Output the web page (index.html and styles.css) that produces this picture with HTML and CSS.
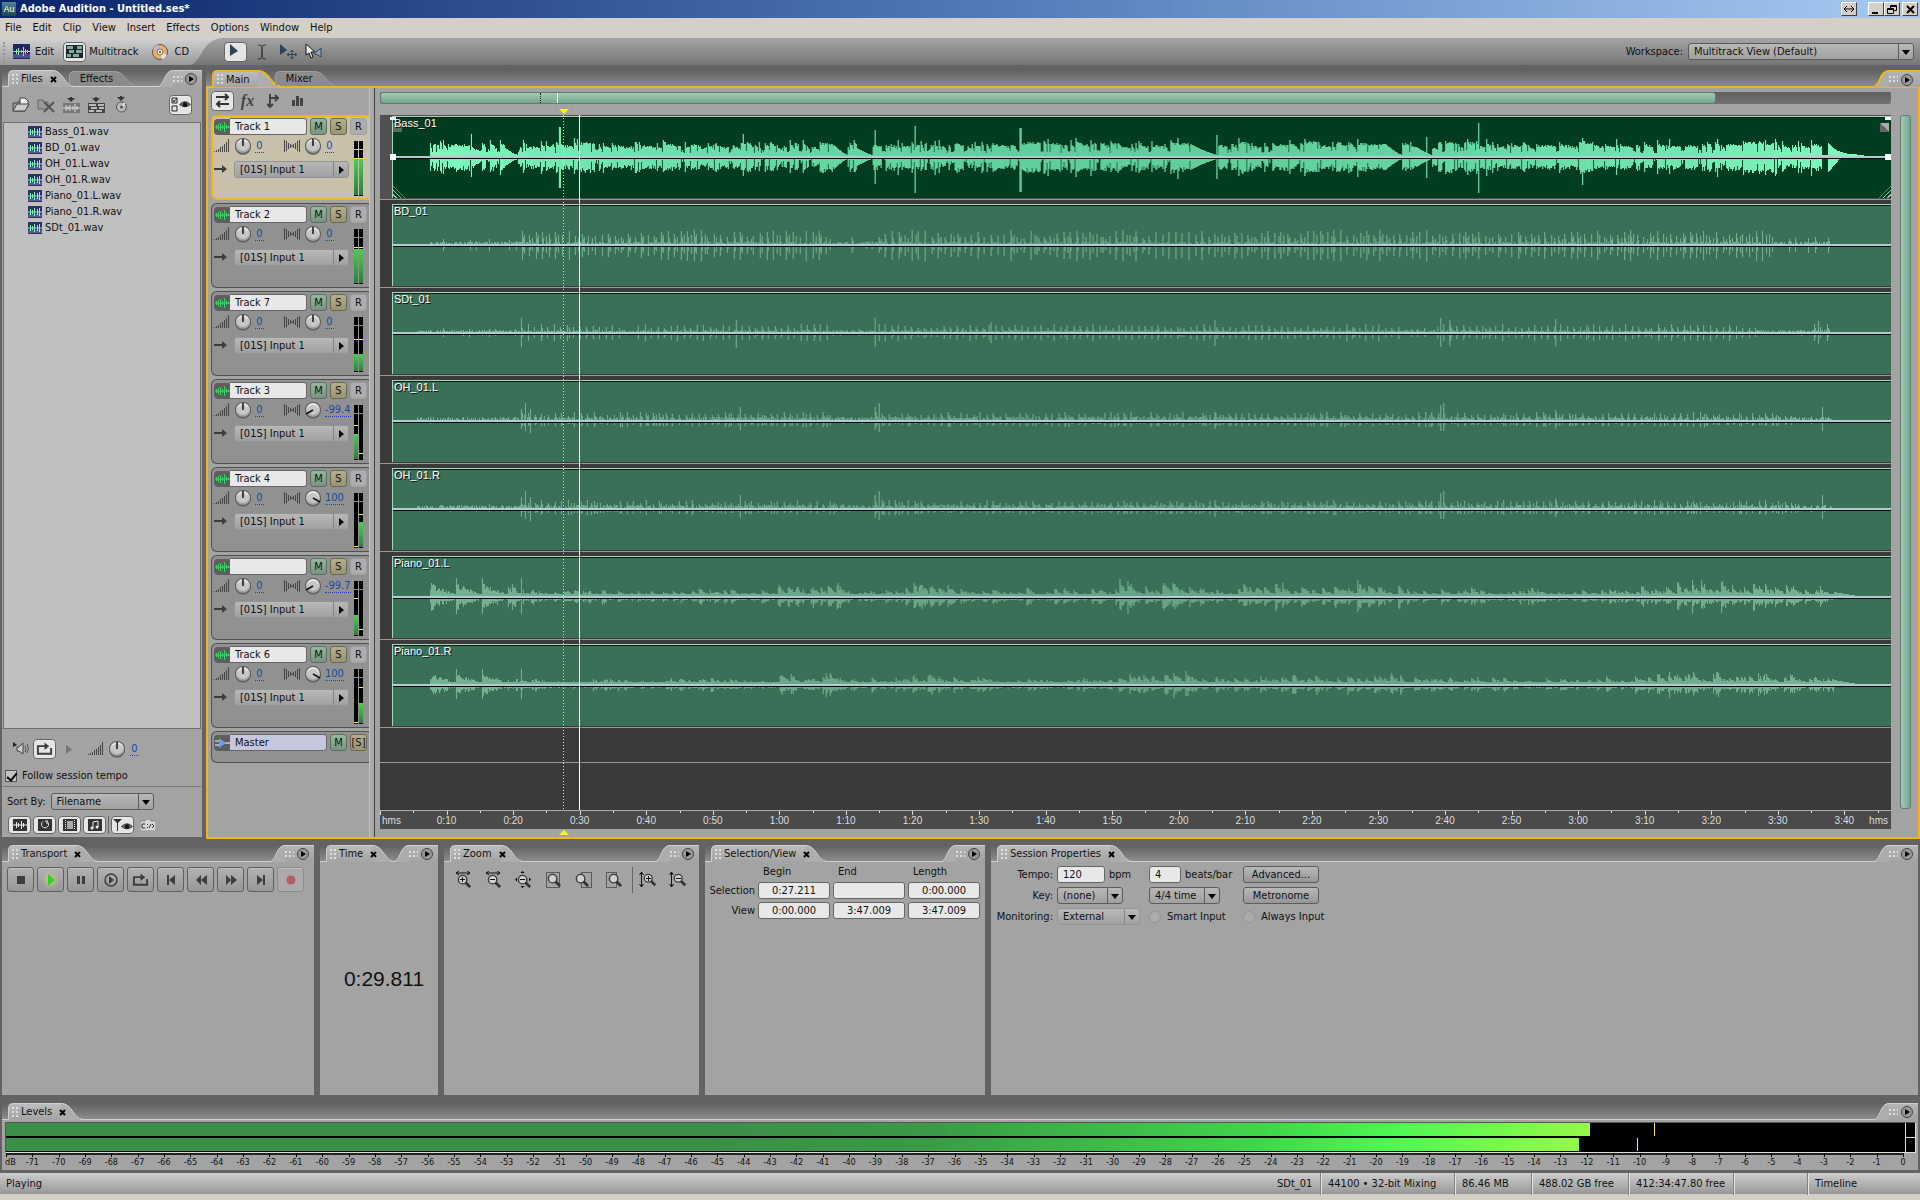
FILE: index.html
```html
<!DOCTYPE html>
<html lang="en">
<head>
<meta charset="utf-8">
<title>Adobe Audition - Untitled.ses*</title>
<link rel="stylesheet" href="styles.css">
</head>
<body>
<svg class="defs" aria-hidden="true">
  <symbol id="i-wave" viewBox="0 0 16 12"><path d="M1 6h15M2.500 4v4M4.500 3v6M6.500 2v8M8.500 4v4M10.500 1v10M12.500 4v4M14.500 5v2" fill="none" stroke="currentColor"/></symbol>
  <symbol id="i-file" viewBox="0 0 14 12"><rect width="14" height="12" fill="#2b3263"/><rect y="8" width="14" height="3" fill="#53608f"/><path d="M0 6h14M2.500 3v6M4.500 4v4M6.500 2v8M9.500 3v6M11.500 2v8" fill="none" stroke="#8df0c0"/></symbol>
  <symbol id="i-vol" viewBox="0 0 16 14"><path d="M.5 12v1M2.500 11v2M4.500 10v3M6.500 8v5M8.500 7v6M10.500 5v8M12.500 3v10M14.500 0v13" stroke="#444" fill="none"/></symbol>
  <symbol id="i-pan" viewBox="0 0 16 14"><path d="M.5 1v12M2.500 2v10M4.500 4v6M6.500 5v4M9.500 5v4M11.500 4v6M13.500 2v10M15.500 1v12M6 7h4" stroke="#444" fill="none"/></symbol>
  <symbol id="i-knob" viewBox="0 0 18 18"><circle cx="9" cy="10" r="8" fill="#777"/><circle cx="9" cy="9" r="8" fill="#5d5d5d"/><circle cx="9" cy="9" r="7" fill="url(#knob)"/><circle cx="9" cy="9" r="5" fill="#c6c6c6"/></symbol>
  <linearGradient id="knob" x2="0" y2="1"><stop stop-color="#f2f2f2"/><stop offset="1" stop-color="#9a9a9a"/></linearGradient>
  <symbol id="i-right" viewBox="0 0 14 10"><path d="M0 5h9" fill="none" stroke="#3d3d3d" stroke-width="2"/><path d="M8 1l5 4-5 4z" fill="#3d3d3d"/></symbol>
  <symbol id="i-loop" viewBox="0 0 18 14"><path d="M10 4H2v8h14V6" fill="none" stroke="#3d3d3d" stroke-width="2"/><path d="M9 0l5 4-5 4z" fill="#3d3d3d"/></symbol>
  <symbol id="i-glass" viewBox="0 0 16 16"><circle cx="6" cy="6" r="4.500" fill="#d0d0d0" stroke="#3a3a3a" stroke-width="1.500"/><path d="M9 9l5 5" stroke="#333" stroke-width="3"/></symbol>
  <symbol id="i-eye" viewBox="0 0 12 10"><path d="M0 5Q6-1 12 5 6 10 0 5z" fill="#777" stroke="#222"/><circle cx="6" cy="5" r="2.500" fill="#111"/></symbol>
  <symbol id="i-down" viewBox="0 0 10 5"><path d="M4 0h2v1h3L5 5 1 1h3z" fill="#333"/></symbol>
</svg>

<div class="app">
  <header class="titlebar">
    <span class="logo">Au</span>
    <h1>Adobe Audition - Untitled.ses*</h1>
    <div class="winbtns">
      <button class="wb wb-gap" aria-label="Span"><svg width="12" height="8"><path d="M1 4h10M4 1L1 4l3 3M8 1l3 3-3 3" fill="none" stroke="#000"/></svg></button>
      <button class="wb" aria-label="Minimize"><svg width="10" height="9"><path d="M1 7h6v2H1z"/></svg></button>
      <button class="wb wb-small-gap" aria-label="Restore"><svg width="10" height="9"><path d="M3.500 3V.5h6v5H7M.5 3.500h6v5h-6zM3 1.500h7M0 4.500h7" fill="none" stroke="#000"/></svg></button>
      <button class="wb" aria-label="Close"><svg width="9" height="9"><path d="M1 1l7 7M8 1L1 8" stroke="#000" stroke-width="2"/></svg></button>
    </div>
  </header>

  <nav class="menubar">
    <a href="#">File</a><a href="#">Edit</a><a href="#">Clip</a><a href="#">View</a><a href="#">Insert</a><a href="#">Effects</a><a href="#">Options</a><a href="#">Window</a><a href="#">Help</a>
  </nav>

  <div class="toolbar">
    <div class="modes">
      <i class="handle"></i>
      <button class="mode"><svg width="17" height="15"><rect width="17" height="15" fill="#20275a"/><path d="M0 10h17v4H0z" fill="#46538c"/><path d="M0 7.500h17M3.500 5v5M5.500 4v7M8.500 6v3M10.500 3v9M12.500 5v5M14.500 6v3" stroke="#7ef0b0" fill="none"/></svg>Edit</button>
      <button class="mode"><span class="pressed"><svg width="17" height="13"><rect width="17" height="13" fill="#1c2430"/><path d="M1 1h6v3H1zM11 1h5v3h-5zM3 5h5v3H3zM10 5h6v3h-6zM1 9h4v3H1zM7 9h6v3H7z" fill="#7fae98"/></svg></span>Multitrack</button>
      <button class="mode mode-cd"><svg width="16" height="16"><circle cx="8" cy="8" r="7.500" fill="#e2b36c" stroke="#6b4f50"/><path d="M8 8L1 5a8 8 0 0 1 5-4.500z" fill="#b8b4e0"/><path d="M8 8l7 3a8 8 0 0 1-5 4.500z" fill="#ecdcf0"/><circle cx="8" cy="8" r="3" fill="#f2ead8" stroke="#8a6a48"/><circle cx="8" cy="8" r="1" fill="#444"/></svg>CD</button>
    </div>
    <svg class="curve" width="32" height="27" viewBox="0 0 32 27" preserveAspectRatio="none"><defs><linearGradient id="tg" x2="0" y2="1"><stop stop-color="#d2d2d2"/><stop offset="1" stop-color="#999"/></linearGradient></defs><path d="M0 0H32C20 1 15 9 11 16S4 26 0 27z" fill="url(#tg)"/></svg>
    <div class="cursors">
      <button class="pressed" aria-label="Hybrid tool"><svg width="17" height="15"><path d="M3 0v12l8-5z" fill="#2c4459"/></svg></button>
      <button class="tool" aria-label="Time selection"><svg width="10" height="16"><path d="M1 1c3 0 4 1 4 2v10c0 1-1 2-4 2M9 1C6 1 5 2 5 3v10c0 1 1 2 4 2" fill="none" stroke="#333"/></svg></button>
      <button class="tool" aria-label="Move/copy clip"><svg width="18" height="16"><path d="M1 0v11l7-5z" fill="#2c4459"/><path d="M13 6v9M8 10.500h9M11.500 8L13 6l1.500 2M11.500 13l1.500 2 1.500-2M10 9l-2 1.500 2 1.500M16 9l2 1.500-2 1.500" fill="none" stroke="#2c4459"/></svg></button>
      <button class="tool" aria-label="Scrub"><svg width="18" height="16"><path d="M1 0v11l3-2 2 5 2-1-2-5h4z" fill="#eee" stroke="#111"/><path d="M9 8h2l5-4v9l-5-3H9z" fill="#8fa3b5" stroke="#2c4459"/></svg></button>
    </div>
    <label class="workspace-label" for="workspace">Workspace:</label>
    <span class="drop drop-dark drop-workspace"><select id="workspace"><option>Multitrack View (Default)</option></select></span>
  </div>

  <main class="work">
    <section class="panel files">
      <div class="strip" data-corner>
        <button class="tab on" data-close>Files</button><button class="tab off">Effects</button>
      </div>
      <div class="body files-body">
        <div class="file-tools">
          <button class="ico" aria-label="Import"><svg width="19" height="16"><path d="M1 6h5l1-2h6v10H1z" fill="#999" stroke="#444"/><path d="M8 1h5l3 3v6H8z" fill="#eee" stroke="#444"/><path d="M1 14l4-7h12l-4 7z" fill="#ccc" stroke="#444"/></svg></button>
          <button class="ico" aria-label="Close file"><svg width="19" height="16"><path d="M1 3h5l1 2h4v7H1z" fill="#999" stroke="#666"/><path d="M7 5l10 10M17 5L7 15" stroke="#555" stroke-width="2"/></svg></button>
          <button class="ico" aria-label="Edit file"><svg width="17" height="16"><use href="#i-down" width="10" height="5" x="3"/><path d="M0 6h17v10H0z" fill="#777"/><path d="M0 11h17M3 8v6M5 9v4M7 8v6M10 9v4M12 7v8M14 9v4" stroke="#ddd" fill="none"/></svg></button>
          <button class="ico" aria-label="Insert into multitrack"><svg width="17" height="16"><use href="#i-down" width="10" height="5" x="3"/><path d="M0 6h17v10H0z" fill="#444"/><path d="M1 7h7v2H1zM10 7h6v2h-6zM3 10h6v2H3zM11 10h5v2h-5zM1 13h5v2H1zM8 13h6v2H8z" fill="#bbb"/></svg></button>
          <button class="ico" aria-label="Insert into CD"><svg width="13" height="17"><use href="#i-down" width="10" height="5" x="1"/><circle cx="6.500" cy="11" r="5" fill="#bbb" stroke="#555"/><path d="M6 11l4-4" stroke="#fff"/><circle cx="6.500" cy="11" r="1.500" fill="#555"/></svg></button>
          <button class="pressed push" aria-label="Show options"><svg width="20" height="16"><path d="M1 1h5v5H1zM1 9h5v5H1zM2 3l1 2 3-4" fill="none" stroke="#222"/><use href="#i-eye" x="8" y="3" width="12" height="9"/></svg></button>
        </div>
        <ul class="file-list">
          <li><svg width="14" height="12"><use href="#i-file"/></svg>Bass_01.wav</li>
          <li><svg width="14" height="12"><use href="#i-file"/></svg>BD_01.wav</li>
          <li><svg width="14" height="12"><use href="#i-file"/></svg>OH_01.L.wav</li>
          <li><svg width="14" height="12"><use href="#i-file"/></svg>OH_01.R.wav</li>
          <li><svg width="14" height="12"><use href="#i-file"/></svg>Piano_01.L.wav</li>
          <li><svg width="14" height="12"><use href="#i-file"/></svg>Piano_01.R.wav</li>
          <li><svg width="14" height="12"><use href="#i-file"/></svg>SDt_01.wav</li>
        </ul>
        <div class="preview">
          <button class="ico" aria-label="Auto-play"><svg width="18" height="14"><path d="M1 0v5l4-2z" fill="#222"/><path d="M5 5h2l4-4v11L7 9H5z" fill="#ccc" stroke="#444"/><path d="M13 4q2 3 0 6M15 2q3 4 0 9" fill="none" stroke="#555"/></svg></button>
          <button class="pressed" aria-label="Loop"><svg width="17" height="14"><use href="#i-loop"/></svg></button>
          <button class="ico" aria-label="Play"><svg width="6" height="9"><path d="M0 0l6 4.500L0 9z" fill="#777"/></svg></button>
          <span class="gain"><svg width="16" height="14"><use href="#i-vol"/></svg><svg width="18" height="18"><use href="#i-knob"/><path d="M9 9V2" stroke="#111" stroke-width="1.500"/></svg><a href="#" class="val">0</a></span>
        </div>
        <label class="follow"><input type="checkbox" checked>Follow session tempo</label>
        <div class="sort"><label for="sort">Sort By:</label><span class="drop drop-dark drop-sort"><select id="sort"><option>Filename</option></select></span></div>
        <div class="filters">
          <button class="pressed" aria-label="Audio"><svg width="14" height="12"><rect width="14" height="12" fill="#333"/><path d="M0 6h14M3.500 3v6M5.500 4v4M8.500 2v8M10.500 4v4" stroke="#eee" fill="none"/></svg></button>
          <button class="pressed" aria-label="Loops"><svg width="14" height="12"><rect width="14" height="12" fill="#333"/><path d="M5 2.500a3.500 3.500 0 1 0 4 0V5M7 2h3" stroke="#eee" fill="none"/></svg></button>
          <button class="pressed" aria-label="Video"><svg width="14" height="12"><rect width="14" height="12" fill="#333"/><path d="M4 2h6v8H4z" fill="#aaa"/><path d="M2.500 1v10M11.500 1v10" stroke="#eee" stroke-dasharray="1 1"/></svg></button>
          <button class="pressed" aria-label="MIDI"><svg width="14" height="12"><rect width="14" height="12" fill="#333"/><path d="M5 9V3l5-1v6" fill="none" stroke="#eee"/><circle cx="4" cy="9" r="1.500" fill="#eee"/><circle cx="9" cy="8" r="1.500" fill="#eee"/></svg></button>
          <i class="vsep"></i>
          <button class="pressed" aria-label="Filter view"><svg width="20" height="13"><path d="M0 0h9L5 4v8H4V4z" fill="#333"/><use href="#i-eye" x="8" y="3" width="12" height="9"/></svg></button>
          <button class="ico" aria-label="Show full path"><svg width="16" height="12"><path d="M0 2h5l1-2h4l1 2h5v10H0z" fill="#d6d6d6" stroke="#888"/><path d="M5 5H2v4h3M7.500 5v1M7.500 8v1M9 9l2-4M12 5l2 2-2 2" fill="none" stroke="#333"/></svg></button>
        </div>
      </div>
    </section>

    <section class="panel main-panel">
      <div class="strip gold" data-corner>
        <button class="tab on">Main</button><button class="tab off">Mixer</button>
      </div>
      <div class="body main-body">
        <div class="heads">
          <div class="view-tools">
            <button class="pressed" aria-label="Inputs/Outputs"><svg width="15" height="15"><path d="M1 4h12M10 1l3 3-3 3M14 11H2M5 8l-3 3 3 3" fill="none" stroke="#333" stroke-width="2"/></svg></button>
            <button class="ico fx" aria-label="Effects"><em>fx</em></button>
            <button class="ico" aria-label="Sends"><svg width="12" height="14"><path d="M3 0v12M3 4h8M8 1l3 3-3 3M0 10l3 3 3-3" fill="none" stroke="#444" stroke-width="2"/></svg></button>
            <button class="ico" aria-label="EQ"><svg width="12" height="10"><path d="M0 4h3v6H0zM4 0h3v10H4zM8 2h3v8H8z" fill="#444"/></svg></button>
          </div>
          <div id="track-heads"></div>
          <div class="head master">
            <div class="row1"><span class="tag"><svg width="16" height="12"><path d="M1 4h5M1 8h5M11 6h5" stroke="#fff"/><path d="M5 1l7 5-7 5z" fill="#6a9cf0"/></svg></span><input class="name" value="Master" aria-label="Master name"><button class="mk m">M</button><button class="mk s">[S]</button></div>
          </div>
        </div>
        <i class="divider"></i>
        <div class="timeline">
          <div class="hscroll"><div class="hthumb"><i class="sel-tick"></i><i class="play-tick"></i></div></div>
          <div class="lanes" id="lanes">
            <div class="lane-master"></div>
            <i class="sel-line"></i><i class="play-line"></i>
            <i class="mark mark-top"></i>
          </div>
          <div class="ruler" id="ruler"><i class="mark mark-bot"></i></div>
        </div>
        <div class="vscroll"><i class="vthumb"></i></div>
      </div>
    </section>
  </main>

  <div class="docks">
    <section class="panel transport">
      <div class="strip" data-corner><button class="tab on" data-close>Transport</button></div>
      <div class="body trans-row">
        <button class="tb" aria-label="Stop"><svg width="14" height="12"><path d="M3 2h8v8H3z"/></svg></button>
        <button class="tb play" aria-label="Play"><svg width="14" height="14"><path d="M4 1l7 6-7 6z" fill="#35d021"/></svg></button>
        <button class="tb" aria-label="Pause"><svg width="14" height="12"><path d="M3 2h3v8H3zM8 2h3v8H8z"/></svg></button>
        <button class="tb" aria-label="Play to end"><svg width="14" height="14"><circle cx="7" cy="7" r="6" fill="none" stroke="#3d3d3d" stroke-width="1.500"/><path d="M5 3l5 4-5 4z"/></svg></button>
        <button class="tb" aria-label="Loop play"><svg width="17" height="14"><use href="#i-loop"/></svg></button>
        <button class="tb" aria-label="Go to beginning"><svg width="14" height="12"><path d="M3 1h2v10H3zM11 1v10L5 6z"/></svg></button>
        <button class="tb" aria-label="Rewind"><svg width="14" height="12"><path d="M7 1v10L2 6zM13 1v10L7 6z"/></svg></button>
        <button class="tb" aria-label="Fast forward"><svg width="14" height="12"><path d="M2 1v10l5-5zM7 1v10l6-5z"/></svg></button>
        <button class="tb" aria-label="Go to end"><svg width="14" height="12"><path d="M9 1h2v10H9zM3 1v10l6-5z"/></svg></button>
        <button class="tb rec" aria-label="Record"><svg width="14" height="12"><circle cx="7" cy="6" r="4.500" fill="#b25f62"/></svg></button>
      </div>
    </section>
    <section class="panel time">
      <div class="strip" data-corner><button class="tab on" data-close>Time</button></div>
      <div class="body clock"><output>0:29.811</output></div>
    </section>
    <section class="panel zoom">
      <div class="strip" data-corner><button class="tab on" data-close>Zoom</button></div>
      <div class="body zoom-row">
        <button class="ico" aria-label="Zoom in horizontally"><svg width="18" height="18"><path d="M1 2h14M4 0L1 2l3 2M12 0l3 2-3 2" stroke="#111" fill="none"/><use href="#i-glass" x="2" y="3" width="15" height="15"/><path d="M5 8.500h5M7.500 6v5" stroke="#111"/></svg></button>
        <button class="ico" aria-label="Zoom out horizontally"><svg width="18" height="18"><path d="M1 2h14M4 0L1 2l3 2M12 0l3 2-3 2" stroke="#111" fill="none"/><use href="#i-glass" x="2" y="3" width="15" height="15"/><path d="M5 8.500h5" stroke="#111"/></svg></button>
        <button class="ico" aria-label="Zoom out full"><svg width="18" height="18"><path d="M7.500 0l2 2h-4zM7.500 17l2-2h-4zM0 8.500l2-2v4zM16 8.500l-2-2v4z"/><use href="#i-glass" x="2" y="3" width="15" height="15"/><path d="M5 8.500h5" stroke="#111"/></svg></button>
        <button class="ico" aria-label="Zoom to selection"><svg width="18" height="18"><path d="M1.500 1.500h13v15h-13z" fill="none" stroke="#111" stroke-dasharray="1 1"/><use href="#i-glass" x="2" y="2" width="15" height="15"/></svg></button>
        <button class="ico" aria-label="Zoom to left edge"><svg width="18" height="18"><path d="M6.500 1.500h10v15h-10z" fill="none" stroke="#111" stroke-dasharray="1 1"/><use href="#i-glass" x="0" y="2" width="15" height="15"/></svg></button>
        <button class="ico" aria-label="Zoom to right edge"><svg width="18" height="18"><path d="M1.500 1.500h10v15h-10z" fill="none" stroke="#111" stroke-dasharray="1 1"/><use href="#i-glass" x="3" y="2" width="15" height="15"/></svg></button>
        <i class="vsep tall"></i>
        <button class="ico" aria-label="Zoom in vertically"><svg width="18" height="18"><path d="M2.500 1v15M.5 4l2-3 2 3M.5 13l2 3 2-3" stroke="#111" fill="none"/><use href="#i-glass" x="4" y="2" width="14" height="14"/><path d="M7 7.500h5M9.500 5v5" stroke="#111"/></svg></button>
        <button class="ico" aria-label="Zoom out vertically"><svg width="18" height="18"><path d="M2.500 1v15M.5 4l2-3 2 3M.5 13l2 3 2-3" stroke="#111" fill="none"/><use href="#i-glass" x="4" y="2" width="14" height="14"/><path d="M7 7.500h5" stroke="#111"/></svg></button>
      </div>
    </section>
    <section class="panel selview">
      <div class="strip" data-corner><button class="tab on" data-close>Selection/View</button></div>
      <div class="body sel-grid">
        <span></span><span class="col">Begin</span><span class="col">End</span><span class="col">Length</span>
        <span class="lab">Selection</span><input value="0:27.211" aria-label="Selection begin"><input value="" aria-label="Selection end"><input value="0:00.000" aria-label="Selection length">
        <span class="lab">View</span><input value="0:00.000" aria-label="View begin"><input value="3:47.009" aria-label="View end"><input value="3:47.009" aria-label="View length">
      </div>
    </section>
    <section class="panel session">
      <div class="strip" data-corner><button class="tab on" data-close>Session Properties</button></div>
      <div class="body ses-grid">
        <label class="lab" for="tempo">Tempo:</label><span class="cell"><input id="tempo" class="w-tempo" value="120">bpm</span><span class="cell"><input class="w-beats" value="4" id="beats"><label for="beats">beats/bar</label></span><button class="btn">Advanced...</button>
        <label class="lab" for="key">Key:</label><span class="cell"><span class="drop drop-dark w-key"><select id="key"><option>(none)</option></select></span></span><span class="cell"><span class="drop drop-dark w-sig"><select aria-label="Time signature"><option>4/4 time</option></select></span></span><button class="btn">Metronome</button>
        <label class="lab" for="mon">Monitoring:</label><span class="cell"><span class="drop w-mon"><select id="mon"><option>External</option></select></span></span><label class="cell radio"><input type="radio" name="mode">Smart Input</label><label class="cell radio"><input type="radio" name="mode">Always Input</label>
      </div>
    </section>
  </div>

  <section class="panel levels">
    <div class="strip" data-corner><button class="tab on" data-close>Levels</button></div>
    <div class="body levels-body">
      <div class="bars">
        <div class="chan"><i class="lvl" style="width:83.5%"></i><i class="pk" style="left:86.900%"></i></div>
        <div class="chan"><i class="lvl" style="width:82.9%"></i><i class="pk" style="left:86%"></i></div>
        <div class="clipbox"><i></i><i></i></div>
      </div>
      <div class="scale" id="scale"></div>
    </div>
  </section>

  <footer class="status">
    <span class="st-main">Playing</span><span class="st-file">SDt_01</span><span class="st st1">44100 • 32-bit Mixing</span><span class="st st2">86.46 MB</span><span class="st st3">488.02 GB free</span><span class="st st4">412:34:47.80 free</span><span class="st st5"></span><span class="st st6">Timeline</span>
  </footer>
</div>
<script src="app.js"></script>
</body>
</html>
```
FILE: styles.css
```css
* { box-sizing: border-box; }
body { margin: 0; background: #636363; color: #111; font: 11px/16px "DejaVu Sans Condensed", "DejaVu Sans", sans-serif; }
button, input, select { font: inherit; color: inherit; margin: 0; padding: 0; border: 0; background: none; }
h1, ul { margin: 0; padding: 0; list-style: none; }
a { color: inherit; text-decoration: none; }
i { display: block; }
svg { display: block; flex: none; }
.defs { position: absolute; width: 0; height: 0; }
.app { display: flex; flex-direction: column; min-height: 100vh; }

.titlebar { display: flex; align-items: center; height: 18px; gap: 4px; padding: 0 2px; background: linear-gradient(90deg, #0a246a, #4f78b8 50%, #a6caf0); color: #fff; }
.titlebar h1 { flex: 1; font: bold 11px/18px "DejaVu Sans Condensed", sans-serif; }
.logo { width: 14px; height: 14px; background: linear-gradient(#4f8a90, #1d4549); font: 9px/14px "Liberation Sans", sans-serif; text-align: center; }
.winbtns { display: flex; }
.wb { width: 16px; height: 14px; background: #d4d0c8; border: 1px solid; border-color: #fff #404040 #404040 #fff; display: flex; align-items: center; justify-content: center; }
.wb-gap { margin-right: 11px; }
.wb-small-gap { margin-right: 2px; }

.menubar { display: flex; gap: 11px; height: 20px; padding: 0 5px; line-height: 20px; background: #d4d0c8; }

.toolbar { display: flex; align-items: center; height: 27px; padding-right: 6px; background: linear-gradient(#a4a4a4, #757575); }
.modes { display: flex; align-items: center; height: 27px; width: 190px; padding-left: 3px; background: linear-gradient(#d2d2d2, #999); }
.handle { width: 3px; height: 20px; margin-right: 8px; border-left: 2px dotted #999; }
.mode { display: flex; align-items: center; gap: 5px; margin-right: 9px; }
.mode .pressed { margin-right: -2px; }
.mode-cd { margin-left: 4px; gap: 7px; }
.curve { height: 27px; }
.cursors { display: flex; gap: 3px; padding-left: 2px; flex: 1; }
.tool, .ico { display: flex; align-items: center; justify-content: center; width: 23px; height: 20px; }
.pressed { display: flex; align-items: center; justify-content: center; width: 23px; height: 20px; border: 1px solid #666; border-radius: 4px; background: #e4e4e4; box-shadow: inset 0 0 2px #fff; }
.workspace-label { margin-right: 5px; }

.drop { position: relative; display: block; height: 17px; border: 1px solid #949494; border-radius: 3px; background: linear-gradient(#b8b8b8, #a0a0a0); }
.drop::before { content: ""; position: absolute; right: 14px; top: 0; bottom: 0; border-left: 1px solid #868686; }
.drop::after { content: ""; position: absolute; right: 3px; top: 6px; border: 4px solid transparent; border-top: 5px solid #000; border-bottom: 0; }
.drop select { display: block; appearance: none; width: 100%; height: 15px; padding-left: 5px; line-height: 15px; outline: 0; }
.drop-dark { border-color: #5c5c5c; }
.drop-dark::before { border-color: #5c5c5c; }
.drop-workspace { width: 226px; }

.work { display: flex; gap: 4px; flex: 1; padding: 5px 0 0 2px; }
.panel { display: flex; flex-direction: column; min-width: 0; }
.strip { display: flex; align-items: flex-end; height: 16px; padding-left: 6px; background: linear-gradient(#606060, #8c8c8c); position: relative; z-index: 1; }
.body { flex: 1; background: #a3a3a3; border-top: 1px solid #cfcfcf; min-width: 0; }
.tab { display: flex; align-items: center; height: 17px; line-height: 16px; margin-bottom: -1px; position: relative; white-space: nowrap; }
.tab .in { display: flex; align-items: center; height: 17px; padding-left: 3px; background: linear-gradient(#bcbcbc, #a3a3a3); border-top: 1px solid #d0d0d0; border-left: 1px solid #d0d0d0; border-radius: 5px 0 0 0; }
.tab.off .in { padding-left: 10px; background: #8b8b8b; border-color: #a0a0a0; height: 14px; }
.tab.off { height: 14px; margin: 0 0 1px -5px; }
.tab.on:not([data-close]) .in { padding-right: 8px; }
.grip { width: 6px; height: 11px; margin-right: 3px; background: radial-gradient(circle at 1px 1px, #ddd 1px, transparent 1px) 0 0 / 4px 4px; }
.close { margin-left: 7px; margin-right: -5px; position: relative; z-index: 1; }
.corner { display: flex; align-items: center; height: 17px; margin: 0 0 -1px auto; }
.corner .fill { display: flex; align-items: center; height: 17px; padding-right: 5px; gap: 3px; background: linear-gradient(#b4b4b4, #a3a3a3); border-top: 1px solid #d0d0d0; }
.corner .grip { width: 9px; height: 7px; margin: 0; }
.gold .tab.on .in, .gold .fill { border-color: #f0b41e; border-top-width: 2px; }
.gold .tab.on .in { border-left-width: 2px; }
.gold .fill { padding-right: 7px; }

.files { width: 200px; margin-bottom: 3px; }
.files-body { display: flex; flex-direction: column; padding: 0 1px; }
.file-tools { display: flex; align-items: center; height: 35px; padding: 0 9px 0 7px; gap: 2px; }
.push { margin-left: auto; }
.file-list { flex: 1; padding: 1px 0 0 24px; background: #c0c0c0; border: 1px solid #707070; }
.file-list li { display: flex; align-items: center; gap: 3px; height: 16px; }
.preview { display: flex; align-items: center; height: 38px; padding: 2px 0 0 6px; gap: 1px; }
.gain { display: flex; align-items: center; gap: 4px; margin-left: 7px; }
.val { color: #1f45a8; border-bottom: 1px dotted #1f45a8; line-height: 13px; min-width: 9px; text-align: center; }
.follow { display: flex; align-items: center; gap: 5px; height: 17px; padding-left: 2px; }
.follow input { appearance: none; width: 12px; height: 12px; background: #c4c4c4; border: 1px solid #555; position: relative; }
.follow input::after { content: ""; position: absolute; left: 3px; top: 0; width: 4px; height: 8px; border: solid #000; border-width: 0 2px 2px 0; rotate: 40deg; }
.sort { display: flex; align-items: center; gap: 5px; height: 30px; border-top: 1px solid #777; margin-top: 2px; padding: 0 0 0 4px; }
.drop-sort { width: 103px; }
.filters { display: flex; align-items: center; gap: 2px; height: 18px; padding-left: 5px; margin-bottom: 3px; }
.filters .pressed { height: 18px; }
.vsep { width: 1px; height: 18px; background: #666; }

.main-panel { flex: 1; }
.main-body { display: flex; border: 2px solid #f0b41e; margin-bottom: 1px; }
.heads { width: 161px; padding-left: 3px; }
.view-tools { display: flex; align-items: center; gap: 2px; height: 23px; padding-bottom: 2px; margin: 2px 0; }
.fx { font: 16px/18px "Liberation Serif", serif; color: #444; font-weight: bold; }
#track-heads { display: flex; flex-direction: column; gap: 3px; }
.head { height: 85px; padding: 2px 0 0 2px; border: 1px solid #505050; border-right: 0; border-radius: 6px 0 0 6px; background: #919191; display: grid; grid-template: 17px 24px 20px / 138px 1fr; align-content: start; }
.head.sel { background: #c8c0aa; border: 2px solid #f0b41e; border-right: 0; padding: 1px 0 0 1px; }
.row1 { grid-column: 1 / -1; display: flex; height: 17px; align-items: center; }
.tag { width: 16px; height: 16px; display: flex; align-items: center; background: #5e5e5e; border-radius: 4px 0 0 4px; color: #3fd468; }
.name { width: 77px; height: 17px; padding-left: 5px; background: #e8e8e8; border: 1px solid #666; border-left: 0; border-radius: 0 3px 3px 0; margin-right: 3px; }
.mk { width: 17px; height: 17px; margin-right: 3px; border: 1px solid #5e6e60; border-radius: 3px; background: linear-gradient(#96b69e, #78967f); line-height: 15px; }
.mk.s { background: linear-gradient(#b5b08c, #989474); border-color: #6a684e; }
.mk.r { background: #adadad; border-color: #a0a0a0; margin: 0; }
.row2 { display: grid; grid-template-columns: 20px 20px 30px 20px 20px 1fr; align-items: center; height: 22px; }
.row2 .val { justify-self: start; margin-left: 1px; white-space: nowrap; }
.row3 { display: flex; align-items: center; gap: 6px; height: 20px; }
.row3 .drop { width: 115px; }
.drop.side::after { right: 4px; top: 4px; border: 4px solid transparent; border-left: 5px solid #000; border-right: 0; }
.meter { grid-column: 2; grid-row: 2 / 4; display: grid; grid-template: 8px 46px / 4px 4px; gap: 1px; margin: 6px 0 0 2px; }
.meter i { background: #000; position: relative; }
.meter b { position: absolute; left: 0; right: 0; bottom: 1px; background: linear-gradient(#4bd050, #2f7d40); }
.meter u { position: absolute; left: 0; right: 0; height: 1px; background: #ffef40; }
.head.master { height: 32px; margin-top: 3px; grid-template-rows: 17px; }
.master .name { width: 97px; background: #c6c6dc; }
.master .mk.s { margin: 0; }

.divider { width: 6px; background: linear-gradient(90deg, #c2c2c2 1px, #adadad 1px, #a8a8a8 5px, #444 5px); }
.timeline { flex: 1; min-width: 0; margin: 4px 0 8px 5px; display: flex; flex-direction: column; }
.hscroll { height: 12px; background: linear-gradient(#5f5f5f, #727272); border-radius: 2px; margin-bottom: 11px; }
.hthumb, .vthumb { border: 1px solid #5f7d6f; border-radius: 3px; }
.hthumb { width: 88.400%; height: 12px; background: linear-gradient(#a5c9b6, #73a78d); position: relative; }
.sel-tick, .play-tick { position: absolute; top: 0; bottom: 0; left: 11.950%; border-left: 1px dotted #222; }
.play-tick { left: 13.200%; border-left: 1px solid #fff; }
.lanes { flex: 1; position: relative; background: #3a3a3a; border-bottom: 1px solid #aaa; }
.lane { height: 85px; padding: 1px 0 2px 12px; border-bottom: 1px solid #999; margin-bottom: 3px; }
.lane.sel { background: #505050; }
.clip { position: relative; height: 82px; background: #3a7058; border: solid #a8d8b8; border-width: 1px 0 0 1px; box-shadow: inset 0 1px #0c1f16; color: #77b597; }
.lane.sel .clip { background: #003d20; color: #83ffc4; }
.clip svg { width: 100%; height: 80px; }
.clip .zero { position: absolute; left: 0; right: 0; top: 39px; height: 3px; background: #a9cfd0; border-bottom: 1px solid #000; }
.clip .cname { position: absolute; left: 1px; top: 0; font: 11px/13px "Liberation Sans", sans-serif; color: #fff; text-shadow: 1px 1px #111; }
.hd { position: absolute; width: 6px; height: 6px; background: #fff; }
.hd.half { height: 3px; }
.fade { position: absolute; bottom: 0; width: 12px; height: 12px; background: repeating-linear-gradient(45deg, transparent 0 2px, #9fc9b2 2px 3px); clip-path: polygon(0 0, 100% 100%, 0 100%); left: 0; }
.fade.rt { left: auto; right: 0; scale: -1 1; }
.cornerbox { position: absolute; right: 2px; top: 6px; width: 9px; height: 9px; background: linear-gradient(45deg, #666 50%, #aaa 50%); }
.cornerbox.lt { right: auto; left: 0; background: #5c6b63; }
.lane-master { height: 32px; border-bottom: 1px solid #999; }
.sel-line, .play-line { position: absolute; top: 0; bottom: 0; left: 12.080%; width: 1px; background: repeating-linear-gradient(#f5ee2c 0 1px, transparent 1px 3px); }
.play-line { left: 13.180%; background: #fff; }
.mark { position: absolute; left: 12.080%; translate: -4px 0; border: 5px solid transparent; }
.mark-top { top: -6px; border-top-color: #fff11c; border-bottom: 0; }
.mark-bot { bottom: -6px; border-bottom-color: #fff11c; border-top: 0; }
.ruler { position: relative; height: 18px; background: #4a4a4a; color: #ddd; font: 10px/20px "Liberation Sans", sans-serif; }
.ruler span, .scale span { position: absolute; translate: -50% 0; }
.ruler .first { left: 2px; translate: 0 0; }
.ruler .last { right: 3px; translate: 0 0; }
.ruler .tk { position: absolute; top: 0; width: 1px; height: 2px; background: #ddd; }
.ruler .tk.big { height: 4px; }
.vscroll { width: 27px; padding: 27px 7px 28px 9px; display: flex; }
.vthumb { flex: 1; background: linear-gradient(90deg, #a5c9b6, #73a78d); }

.docks { display: flex; gap: 6px; padding: 5px 2px 0; height: 255px; }
.transport { width: 312px; }
.time { width: 118px; }
.zoom { width: 255px; }
.selview { width: 280px; }
.session { flex: 1; }
.trans-row { display: flex; gap: 3px; padding: 5px; }
.tb { width: 27px; height: 25px; display: flex; align-items: center; justify-content: center; border: 1px solid #606060; border-radius: 3px; background: linear-gradient(#b2b2b2, #979797); box-shadow: inset 0 1px #c0c0c0; }
.tb svg { fill: #3d3d3d; }
.tb.play svg { filter: drop-shadow(0 0 3px #e4ff80); }
.tb.rec { border-color: #8c8c8c; background: #ababab; }
.clock { display: flex; align-items: center; justify-content: center; padding-left: 10px; font: 21px/24px "Liberation Sans", sans-serif; }
.zoom-row { display: flex; align-items: flex-start; padding: 8px 0 0 5px; }
.zoom-row .ico { width: 30px; }
.tall { height: 26px; margin: -3px 0 0 3px; }
.sel-grid { display: grid; grid-template-columns: 50px 72px 72px 72px; grid-auto-rows: 17px; align-content: start; gap: 3px; }
.sel-grid .col { padding-left: 5px; line-height: 20px; }
.lab { text-align: right; line-height: 17px; }
.sel-grid input, .ses-grid .w-tempo, .ses-grid .w-beats { height: 17px; min-width: 0; background: #e8e8e8; border: 1px solid #666; border-radius: 3px; text-align: center; }
.ses-grid { display: grid; grid-template-columns: 62px 88px 90px 1fr; column-gap: 4px; grid-auto-rows: 21px; align-items: start; align-content: start; padding-top: 4px; }
.cell { display: flex; align-items: center; gap: 4px; height: 17px; }
.ses-grid .w-tempo { width: 48px; text-align: left; padding-left: 5px; }
.ses-grid .w-beats { width: 32px; text-align: left; padding-left: 5px; }
.w-key { width: 66px; }
.w-sig { width: 71px; }
.w-mon { width: 83px; }
.btn { width: 76px; height: 17px; line-height: 15px; border: 1px solid #5c5c5c; border-radius: 3px; background: linear-gradient(#b8b8b8, #969696); }
.radio { gap: 6px; }
.radio input { appearance: none; width: 12px; height: 12px; border: 1px solid #969696; border-radius: 50%; background: #acacac; }

.levels { margin: 8px 2px 0; }
.levels-body { height: 51px; padding: 2px 2px 0 3px; }
.bars { display: grid; grid-template-columns: 1fr 10px; grid-template-rows: 14px 14px; gap: 1px 2px; background: #000; border: 1px solid #555; border-right-color: #ddd; border-bottom-color: #ddd; }
.chan { position: relative; grid-column: 1; }
.chan:nth-child(2) { grid-row: 2; }
.lvl { height: 13px; background: linear-gradient(90deg, #3b9048 0 45%, #3a9a46 58%, #3fd84a 80%, #4df950 88%, #96f846); }
.pk { position: absolute; top: 0; width: 1px; height: 13px; background: #ffef30; }
.clipbox { grid-column: 2; grid-row: 1 / 3; display: grid; gap: 1px; border-left: 1px solid #ddd; background: #ddd; }
.clipbox i { background: #000; }
.scale { position: relative; height: 17px; margin: 0 13px 0 1px; background: repeating-linear-gradient(90deg, #222 0 1px, transparent 1px) 0 0 / calc(100% / 432) 2px repeat-x; font: 9px/19px "DejaVu Sans Condensed", sans-serif; }
.scale i { position: absolute; top: 0; width: 1px; height: 4px; background: #000; }
.scale .db { translate: 0 0; left: -1px; }

.status { display: flex; align-items: stretch; height: 27px; margin-top: 3px; line-height: 21px; background: linear-gradient(#cdcdcd, #979797) 0 0 / 100% 21px no-repeat #d4d0c8; border-bottom: 5px solid #d4d0c8; white-space: nowrap; }
.st-main { flex: 1; padding-left: 6px; }
.st-file { width: 44px; }
.st { border-left: 1px solid #e4e4e4; box-shadow: -1px 0 #808080; padding-left: 6px; }
.st1 { width: 134px; } .st2 { width: 77px; } .st3 { width: 97px; } .st4 { width: 105px; } .st5 { width: 74px; } .st6 { width: 112px; }
```
FILE: app.js
```js
// Panel chrome: tab slopes, grips, close marks and the corner menu button.
const slope = (stroke, fill, w) => `<svg width="22" height="17"><path d="M0 0C12 0 12 16 22 17H0z" fill="${fill}"/><path d="M0 ${w / 2}C12 ${w / 2} 12 16 22 ${17 - w / 2}" fill="none" stroke="${stroke}" stroke-width="${w}"/></svg>`;
document.querySelectorAll('.strip').forEach(strip => {
  const gold = strip.classList.contains('gold');
  const line = gold ? '#f0b41e' : '#d0d0d0', w = gold ? 2 : 1;
  strip.querySelectorAll('.tab').forEach(tab => {
    const on = tab.classList.contains('on');
    const close = 'close' in tab.dataset ? '<svg class="close" width="7" height="7"><path d="M1 1l5 5M6 1L1 6" stroke="#000" stroke-width="2"/></svg>' : '';
    tab.innerHTML = `<span class="in">${on ? '<i class="grip"></i>' : ''}${tab.textContent}${close}</span>` +
      (on ? slope(line, '#adadad', w) : '<svg width="22" height="14"><path d="M0 0C12 0 12 10 20 14H0z" fill="#8b8b8b"/><path d="M0 .5C12 .5 12 10 20 14" fill="none" stroke="#a0a0a0"/></svg>');
  });
  strip.insertAdjacentHTML('beforeend', `<div class="corner"><svg width="14" height="17"><path d="M14 0C6 0 6 13 0 17h14z" fill="#adadad"/><path d="M14 ${w / 2}C5 1 6 13 0 ${17 - w / 2}" fill="none" stroke="${line}" stroke-width="${w}"/></svg><span class="fill"><i class="grip"></i><button aria-label="Panel menu"><svg width="12" height="12"><circle cx="6" cy="6" r="5.500" fill="#999" stroke="#444"/><path d="M4 3l5 3-5 3z"/></svg></button></span></div>`);
});

// Deterministic random numbers so the waveforms are stable between loads.
function rng(seed) {
  return () => ((seed = (seed * 16807) % 2147483647) / 2147483647);
}

const WIDTH = 1499, MID = 39;
const inRange = (x, list) => list.some(([a, b]) => x >= a && x < b);

function bass(r) {
  const up = new Float32Array(WIDTH), dn = new Float32Array(WIDTH);
  const decays = [[112, 125, 7], [442, 455, 9], [464, 480, 7], [798, 826, 11], [993, 1010, 11], [1024, 1040, 8]];
  let x = 37;
  while (x < 1430) {
    const len = 2 + Math.floor(r() * r() * 22), amp = 7 + r() * 5, tail = 0.5 + r() * 0.6;
    for (let i = 0; i < len && x < 1430; i++, x++) {
      const a = amp * (1 - (1 - tail) * i / len) + r() * 3 + (i === 0 ? r() * 4 : 0);
      up[x] = a; dn[x] = a + r() * 4 - 2;
    }
    const gap = r() < .75 ? 1 : 2 + r() * 2;
    for (let i = 0; i < gap; i++, x++) { up[x] = 3 + r() * 4; dn[x] = r() * 6; }
  }
  decays.forEach(([a, b, h]) => { for (x = a; x < b; x++) up[x] = dn[x] = 1 + h * Math.pow(1 - (x - a) / (b - a), 1.4); });
  for (x = 1430; x < 1436; x++) up[x] = dn[x] = 1;
  for (x = 1436; x < 1472; x++) { up[x] = 1 + 12 * Math.exp(-(x - 1436) / 9); dn[x] = x < 1448 ? 14 * (1448 - x) / 12 : 0; }
  [[78, 22, 19], [166, 29, 30], [167, 29, 30], [184, 17, 12], [350, 22, 18], [482, 26, 26], [522, 30, 35], [627, 28, 34], [628, 28, 34], [785, 18, 21], [824, 21, 21], [1034, 19, 20], [1086, 33, 35], [1190, 18, 27], [1277, 17, 16], [1325, 17, 19]].forEach(([p, a, b]) => { up[p] = a; dn[p] = b; });
  return [up, dn];
}

function drums(r, o) {
  const up = new Float32Array(WIDTH), dn = new Float32Array(WIDTH);
  for (let x = o.start; x < o.end; x++) {
    if (r() < .65) up[x] = o.noise * (0.5 + r()), dn[x] = o.noise * r() * .6;
  }
  for (let x = o.start; x < o.end; x += o.step) {
    const p = Math.round(x), quiet = p < o.full || inRange(p, o.quiet);
    if (quiet && r() < .5) continue;
    const a = o.amp * (quiet ? .15 + r() * .35 : .45 + r() * .55);
    up[p] = a; dn[p] = a * o.low;
    if (r() < o.fat) up[p + 1] = a * .5, dn[p + 1] = a * .4;
    if (!quiet && r() < o.extra) { const q = p + 2 + Math.floor(r() * 3); up[q] = a * .7; dn[q] = a * .6; }
  }
  o.spikes.forEach(([p, a, b]) => { up[p] = a; dn[p] = b; });
  return [up, dn];
}

function piano(r, gain) {
  const up = new Float32Array(WIDTH), dn = new Float32Array(WIDTH);
  const level = x => x < 120 ? 10 : x < 350 ? 6 : inRange(x, [[380, 450], [725, 810], [1240, 1400]]) ? 12 : inRange(x, [[510, 560], [850, 1010]]) ? 11 : 7;
  let x = 37;
  while (x < 1442) {
    const early = x < 115;
    const len = early ? 26 : 3 + Math.floor(r() * 9);
    const amp = level(x) * (early ? 1 : .4 + r() * .8) * gain;
    for (let i = 0; i < len && x < 1442; i++, x++) {
      const fall = early ? Math.pow(1 - i / (len + 1), .8) * (.5 + r() * .6) : Math.pow(1 - i / (len + 3), 1.1) * (.5 + r() * .5);
      const a = Math.max(1.5, amp * fall);
      up[x] = a; dn[x] = a * (.6 + r() * .5);
    }
  }
  [63, 89, 128].forEach(p => { up[p] = 15 * gain; dn[p] = 13 * gain; });
  for (; x < 1465; x++) up[x] = 4 * (1465 - x) / 23;
  return [up, dn];
}

const snareSpikes = [[128, 14, 13], [343, 12, 14], [482, 14, 13], [598, 10, 9], [822, 12, 12], [1048, 14, 13], [1057, 12, 12], [1163, 13, 12], [1426, 11, 10]];
const ohSpikes = [[128, 11, 7], [132, 17, 9], [137, 11, 11], [347, 13, 8], [482, 13, 8], [486, 17, 10], [822, 8, 7], [1048, 15, 9], [1051, 17, 9], [1163, 10, 7], [1430, 13, 9]];
const overhead = seed => drums(rng(seed), { start: 24, end: 1440, full: 128, step: 6.550, amp: 8, low: .6, noise: 2, fat: .5, extra: .3, quiet: [[440, 480], [1400, 1440]], spikes: ohSpikes });

const tracks = [
  { name: 'Track 1', clip: 'Bass_01', pan: '0', wave: bass(rng(11)), lv: [37, 37], pk: [8, 8], sel: true },
  { name: 'Track 2', clip: 'BD_01', pan: '0', wave: drums(rng(5), { start: 37, end: 1438, full: 128, step: 6.600, amp: 14, low: 1.1, noise: 1.5, fat: .6, extra: .55, quiet: [[440, 482], [1380, 1440]], spikes: [] }), lv: [34, 34], pk: [9, 9] },
  { name: 'Track 7', clip: 'SDt_01', pan: '0', wave: drums(rng(8), { start: 24, end: 1438, full: 128, step: 6.500, amp: 8, low: .9, noise: 1.2, fat: .3, extra: .1, quiet: [[230, 240], [440, 480], [1010, 1045], [1370, 1420]], spikes: snareSpikes }), lv: [17, 17], pk: [13, 13] },
  { name: 'Track 3', clip: 'OH_01.L', pan: '-99.4', wave: overhead(21), lv: [25, 0], pk: [11, 39] },
  { name: 'Track 4', clip: 'OH_01.R', pan: '100', wave: overhead(33), lv: [0, 25], pk: [44, 12] },
  { name: '', clip: 'Piano_01.L', pan: '-99.7', wave: piano(rng(41), 1.2), lv: [20, 0], pk: [8, 39] },
  { name: 'Track 6', clip: 'Piano_01.R', pan: '100', wave: piano(rng(57), 1), lv: [0, 20], pk: [44, 9] }
];

const needle = { '0': 'M9 9V2', '1': 'M9 9l7 4', '-': 'M9 9l-7 4' };
const knob = v => `<svg width="18" height="18"><use href="#i-knob"/><path d="${needle[v[0]]}" stroke="#111" stroke-width="1.500"/></svg>`;

document.getElementById('track-heads').innerHTML = tracks.map((t, n) => `
  <div class="head${t.sel ? ' sel' : ''}">
    <div class="row1"><span class="tag"><svg width="16" height="12"><use href="#i-wave"/></svg></span><input class="name" value="${t.name}" aria-label="Track name"><button class="mk m">M</button><button class="mk s">S</button><button class="mk r">R</button></div>
    <div class="row2"><svg width="16" height="14"><use href="#i-vol"/></svg>${knob('0')}<a href="#" class="val">0</a><svg width="16" height="14"><use href="#i-pan"/></svg>${knob(t.pan)}<a href="#" class="val">${t.pan}</a></div>
    <div class="row3"><svg width="14" height="10"><use href="#i-right"/></svg><span class="drop side"><select aria-label="Output of track ${n + 1}"><option>[01S] Input 1</option></select></span></div>
    <div class="meter"><i></i><i></i>${[0, 1].map(c => `<i><b style="height:${t.lv[c]}px"></b><u style="top:${t.pk[c]}px"></u></i>`).join('')}</div>
  </div>`).join('');

const wavePath = ([up, dn]) => {
  let d = '';
  for (let x = 0; x < WIDTH; x++) if (up[x] || dn[x]) d += `M${x}.5 ${MID - Math.round(up[x])}V${MID + 2 + Math.round(dn[x])}`;
  return d;
};
document.getElementById('lanes').insertAdjacentHTML('afterbegin', tracks.map(t => `
  <div class="lane${t.sel ? ' sel' : ''}"><div class="clip"><svg viewBox="0 0 ${WIDTH} 80" preserveAspectRatio="none"><path d="${wavePath(t.wave)}" stroke="currentColor" fill="none" shape-rendering="crispEdges"/></svg><i class="zero"></i>${t.sel ? '<i class="cornerbox"></i><i class="cornerbox lt"></i><i class="fade"></i><i class="fade rt"></i><i class="hd" style="left:-3px;top:37px"></i><i class="hd half" style="left:-3px;top:0"></i><i class="hd half" style="right:0;top:0"></i><i class="hd" style="right:0;top:37px"></i>' : ''}<span class="cname">${t.clip}</span></div></div>`).join(''));

// Time ruler: a label every ten seconds, a short tick every five.
const TOTAL = 227.009;
let marks = '<span class="first">hms</span><span class="last">hms</span>';
for (let s = 0; s < TOTAL; s += 5) {
  const left = (s / TOTAL * 100).toFixed(3);
  marks += `<i class="tk${s % 10 ? '' : ' big'}" style="left:${left}%"></i>`;
  if (s && s % 10 === 0) marks += `<span style="left:${left}%">${Math.floor(s / 60)}:${String(s % 60).padStart(2, '0')}</span>`;
}
document.getElementById('ruler').insertAdjacentHTML('beforeend', marks);

let db = '<span class="db">dB</span>';
for (let v = 72; v >= 0; v--) {
  const left = ((72 - v) / 72 * 100).toFixed(3);
  db += `<i style="left:${left}%"></i>`;
  if (v < 72) db += `<span style="left:${left}%">${v ? '-' + v : 0}</span>`;
}
document.getElementById('scale').innerHTML = db;
```
